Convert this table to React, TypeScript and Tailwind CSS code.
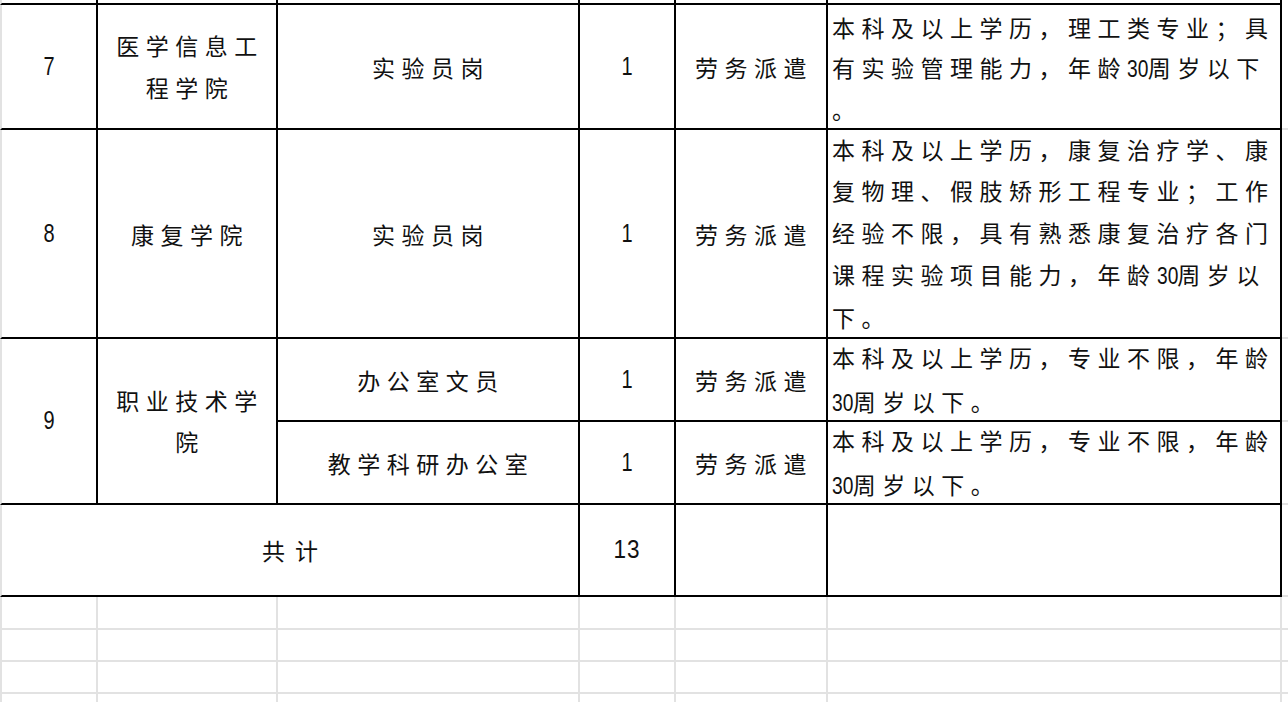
import React from 'react';

const cjk = "font-['Noto_Sans_CJK_SC',sans-serif]";
const num = "font-['Liberation_Sans',sans-serif]";

// black cell lines, 2px, drawn on the right and bottom edge of every cell
const cell = 'border-r-2 border-b-2 border-black overflow-hidden';
const first = 'border-l-2 border-l-[#e2e2e2]';
const grey = 'border-r-2 border-b-2 border-[#e2e2e2]';

// narrow digits: Arial squeezed horizontally, negative margin takes back the width
function Digits({ d, size = 'text-[24px]' }: { d: string; size?: string }) {
  const mr = d.length === 1 ? 'mr-[-3px]' : 'mr-[-6px]';
  return (
    <span className={`${num} ${size} ${mr} inline-block origin-left scale-x-[0.8] tracking-normal`}>{d}</span>
  );
}

function Run({ text }: { text: string }) {
  const parts = text.split(/(\d+)/).filter(Boolean);
  return (
    <>
      {parts.map((p, i) =>
        /^\d+$/.test(p) ? (
          <Digits key={i} d={p} />
        ) : (
          <span key={i} className="tracking-[6.5px]">
            {p}
          </span>
        )
      )}
    </>
  );
}

function Center({ lines, lh = 'leading-[42px]', extra = '' }: { lines: string[]; lh?: string; extra?: string }) {
  return (
    <div className={`${cell} ${extra} flex flex-col items-center justify-center pl-[6px] ${lh}`}>
      {lines.map((l, i) => (
        <div key={i} className="whitespace-nowrap">
          <Run text={l} />
        </div>
      ))}
    </div>
  );
}

function Num({ n, extra = '', wide = false }: { n: string; extra?: string; wide?: boolean }) {
  return (
    <div className={`${cell} ${extra} flex items-center justify-center`}>
      <span className={`${num} text-[25px] inline-block ${wide ? 'scale-x-[0.9] tracking-[1px]' : 'scale-x-[0.8]'}`}>{n}</span>
    </div>
  );
}

function Req({ lines, lh, top = false }: { lines: string[]; lh: string; top?: boolean }) {
  return (
    <div className={`${cell} flex flex-col pl-[4px] ${top ? 'justify-start pt-[2px]' : 'justify-center'} ${lh}`}>
      {lines.map((l, i) => (
        <div key={i} className="whitespace-nowrap">
          <Run text={l} />
        </div>
      ))}
    </div>
  );
}

const Edge = () => <div className="border-b-2 border-[#e2e2e2]" />;

export default function App() {
  return (
    <div className={`w-[1288px] h-[702px] overflow-hidden bg-white text-[23px] text-[#111] ${cjk}`}>
      <div className="grid grid-cols-[98px_180px_302px_96px_152px_454px_6px] grid-rows-[5px_125px_209px_83px_83px_92px_33px_32px_32px_32px]">
        {/* tail of the row above */}
        <div className={`${cell} ${first}`} />
        <div className={cell} />
        <div className={cell} />
        <div className={cell} />
        <div className={cell} />
        <div className={cell} />
        <div />

        {/* 7 */}
        <Num n="7" extra={first} />
        <Center lines={['医学信息工', '程学院']} lh="leading-[41.5px]" />
        <Center lines={['实验员岗']} />
        <Num n="1" />
        <Center lines={['劳务派遣']} />
        <Req
          lines={['本科及以上学历，理工类专业；具', '有实验管理能力，年龄30周岁以下', '。']}
          lh="leading-[40px]"
          top
        />
        <Edge />

        {/* 8 */}
        <Num n="8" extra={first} />
        <Center lines={['康复学院']} />
        <Center lines={['实验员岗']} />
        <Num n="1" />
        <Center lines={['劳务派遣']} />
        <Req
          lines={[
            '本科及以上学历，康复治疗学、康',
            '复物理、假肢矫形工程专业；工作',
            '经验不限，具有熟悉康复治疗各门',
            '课程实验项目能力，年龄30周岁以',
            '下。',
          ]}
          lh="leading-[41.7px]"
        />
        <Edge />

        {/* 9 */}
        <Num n="9" extra={`${first} row-span-2`} />
        <Center lines={['职业技术学', '院']} lh="leading-[41.5px]" extra="row-span-2" />
        <Center lines={['办公室文员']} />
        <Num n="1" />
        <Center lines={['劳务派遣']} />
        <Req lines={['本科及以上学历，专业不限，年龄', '30周岁以下。']} lh="leading-[44px]" />
        <Edge />

        <Center lines={['教学科研办公室']} />
        <Num n="1" />
        <Center lines={['劳务派遣']} />
        <Req lines={['本科及以上学历，专业不限，年龄', '30周岁以下。']} lh="leading-[44px]" />
        <Edge />

        {/* total */}
        <div className={`${cell} ${first} col-span-3 flex items-center justify-center pl-[10px]`}>
          <span className="tracking-[10px]">共计</span>
        </div>
        <Num n="13" wide />
        <div className={cell} />
        <div className={cell} />
        <Edge />

        {/* empty sheet rows */}
        {[0, 1, 2, 3].map((r) => (
          <React.Fragment key={r}>
            <div className={`${grey} ${first}`} />
            <div className={grey} />
            <div className={grey} />
            <div className={grey} />
            <div className={grey} />
            <div className={grey} />
            <Edge />
          </React.Fragment>
        ))}
      </div>
    </div>
  );
}
